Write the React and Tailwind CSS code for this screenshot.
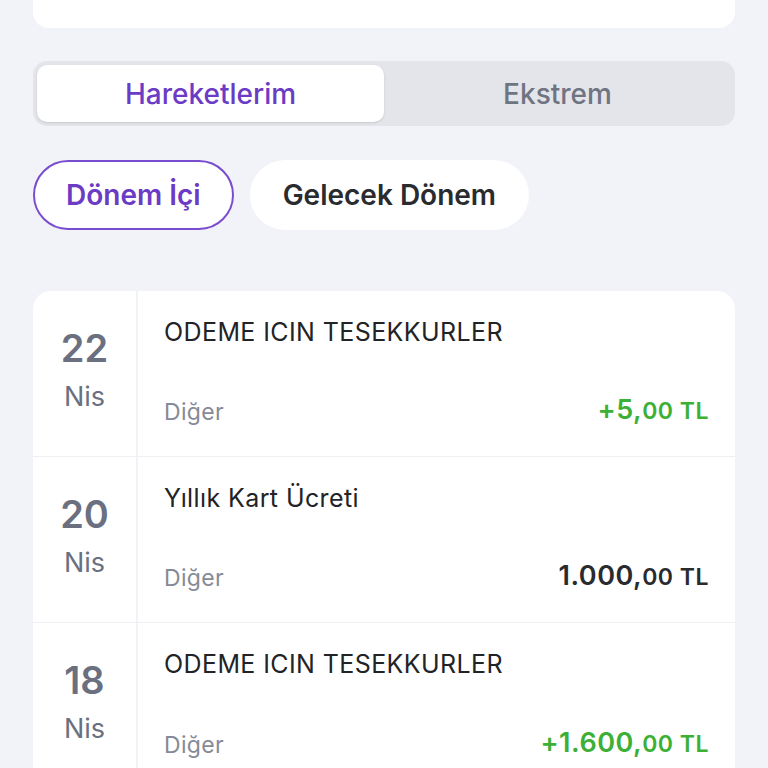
const rows = [
  { day: "22", month: "Nis", title: "ODEME ICIN TESEKKURLER", cat: "Diğer", main: "+5,", dec: "00", positive: true },
  { day: "20", month: "Nis", title: "Yıllık Kart Ücreti", cat: "Diğer", main: "1.000,", dec: "00", positive: false },
  { day: "18", month: "Nis", title: "ODEME ICIN TESEKKURLER", cat: "Diğer", main: "+1.600,", dec: "00", positive: true },
];

const Row = ({ row, last }) => (
  <div className={`flex h-[166px] ${last ? "" : "border-b border-[#eff0f3]"}`}>
    <div className="flex w-[105px] shrink-0 flex-col items-center border-r-2 border-[#f1f2f5] pt-[35px]">
      <span className="text-[38px] leading-[44px] font-semibold text-[#6b7081]">{row.day}</span>
      <span className="mt-[12px] text-[27px] leading-[30px] text-[#6b7081]">{row.month}</span>
    </div>
    <div className="flex flex-1 flex-col justify-between pt-[27px] pb-[29px] pl-[26px] pr-[26px]">
      <span className="text-[25px] leading-[28px] tracking-[0.4px] text-[#222326]">{row.title}</span>
      <div className="flex items-center justify-between">
        <span className="text-[23px] leading-[28px] tracking-[0.3px] text-[#868a96]">{row.cat}</span>
        <span
          className={`font-semibold leading-[28px] tracking-[0.5px] ${
            row.positive ? "text-[#3cb034]" : "text-[#2a2b2f]"
          }`}
        >
          <span className="text-[27px]">{row.main}</span>
          <span className="text-[23px]">{row.dec} TL</span>
        </span>
      </div>
    </div>
  </div>
);

const App = () => {
  return (
    <div
      className="h-[768px] overflow-hidden bg-[#f2f3f8] px-[33px]"
      style={{ fontFamily: "Inter, 'Noto Sans', sans-serif" }}
    >
      <div className="h-[28px] rounded-b-[16px] bg-white" />

      <div className="mt-[33px] grid h-[65px] grid-cols-2 rounded-[14px] bg-[#e4e5ea] p-[4px]">
        <div className="flex items-center justify-center rounded-[10px] bg-white shadow-sm">
          <span className="text-[28px] font-medium text-[#6c3bc5]">Hareketlerim</span>
        </div>
        <div className="flex items-center justify-center">
          <span className="text-[28px] font-medium text-[#6f7482]">Ekstrem</span>
        </div>
      </div>

      <div className="mt-[34px] flex gap-[16px]">
        <button
          type="button"
          className="flex h-[70px] items-center rounded-full border-2 border-[#7a4cd0] bg-white px-[31px] text-[28px] font-semibold text-[#6c3bc5]"
        >
          Dönem İçi
        </button>
        <button
          type="button"
          className="flex h-[70px] items-center rounded-full bg-white px-[33px] text-[28px] font-semibold text-[#2a2b2f]"
        >
          Gelecek Dönem
        </button>
      </div>

      <div className="mt-[61px] overflow-hidden rounded-t-[18px] bg-white">
        {rows.map((row, i) => (
          <Row key={i} row={row} last={i === rows.length - 1} />
        ))}
      </div>
    </div>
  );
};

export default App;
